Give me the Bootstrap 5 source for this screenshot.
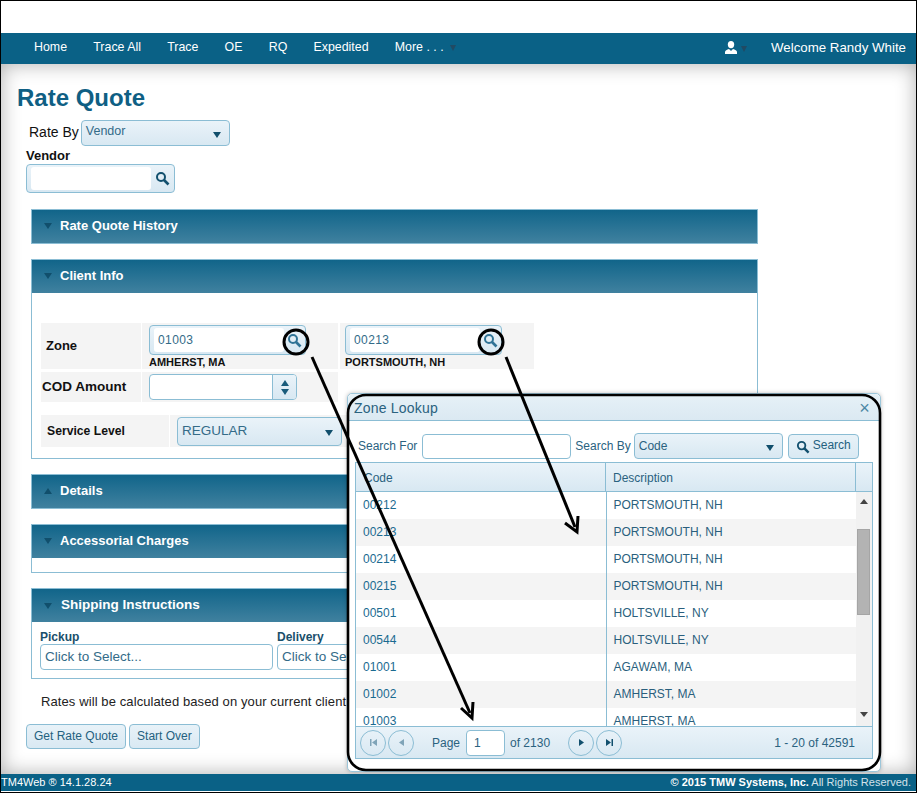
<!DOCTYPE html>
<html lang="en">
<head>
<meta charset="utf-8">
<title>Rate Quote</title>
<link href="https://cdn.jsdelivr.net/npm/bootstrap@5.3.0/dist/css/bootstrap.min.css" rel="stylesheet">
<style>
html,body{margin:0;padding:0;background:#fff;overflow:hidden}
body{font-family:"Liberation Sans",Arial,sans-serif;font-size:13px;color:#111}
.frame{position:relative;width:917px;height:793px;border:1px solid #000;display:flex;flex-direction:column;overflow:hidden;background:#fff}
.topgap{height:32px;flex:none}
.mainbar{height:31px;flex:none;background:#0a6186;color:#fff;padding:0 10px 2px 33px;display:flex;align-items:center}
.mainbar .nav{gap:26.2px;flex-wrap:nowrap}
.mainbar .nav-link{padding:0;color:#fff;font-size:12.4px;white-space:nowrap;display:flex;align-items:center;gap:6px}
.tri-dn{display:inline-block;width:0;height:0;border-left:4px solid transparent;border-right:4px solid transparent;border-top:6px solid #114f6c}
.mainbar .tri-dn.tri-mini{border-left-width:3.5px;border-right-width:3.5px;border-top-width:6px;border-top-color:#214a63;margin-top:2px}
.userbox{margin-left:auto;display:flex;align-items:center;gap:4px}
.welcome{margin-left:24px;font-size:13.3px;white-space:nowrap}
.pagearea{height:710px;flex:none;box-shadow:inset 0 0 20px rgba(0,0,0,.32);overflow:hidden;padding:0}
.pagetitle{font-size:24px;font-weight:700;color:#0f5f84;line-height:30px;margin:19px 0 0 16px}
.rateby{display:flex;align-items:center;margin:7px 0 0 28px;height:26px;font-size:14px;gap:2px}
.rateby>span{padding-bottom:1px}
.ctl-sel{display:flex;align-items:center;justify-content:space-between;border:1px solid #8bbdd4;border-radius:4px;background:linear-gradient(#eaf3f9,#d8e8f2);color:#336b88;padding:0 8px 0 4px;font-size:12.5px}
.ctl-sel .tri-dn{border-top-color:#114f6c;margin-top:3px}
.sel-rate{width:149px;height:26px;align-items:center}
.sel-rate span:first-child{margin-top:-4px}
.vlabel{font-weight:700;font-size:13px;line-height:16px;margin:2px 0 0 25px}
.lookup{display:flex;width:149px;height:29px;margin-left:25px;border:1px solid #8bbdd4;border-radius:4px;background:linear-gradient(#eaf3f9,#d8e8f2);padding:2px 0 2px 4px}
.lookup .field{flex:1;background:#fff;border-radius:3px;min-width:0;padding-left:4px;color:#336b88;font-size:12px;line-height:24px;letter-spacing:.4px}
.lookup .go{flex:none;width:23px;display:flex;align-items:center;justify-content:center}
.panel-x{width:727px;margin-left:30px;border:1px solid #8bbdd4;border-radius:0;background:#fff}
.panel-x .card-header{height:33px;padding:0 0 2px 12px;border:0;border-radius:0;background:linear-gradient(#11658a,#40819f);color:#fff;font-weight:700;font-size:13px;display:flex;align-items:center;gap:8px}
.panel-x .card-header.ship{font-size:13.5px;gap:9px;padding-bottom:0}
.tri-up{display:inline-block;width:0;height:0;border-left:4px solid transparent;border-right:4px solid transparent;border-bottom:6px solid #114f6c}
.p1{margin-top:16px;height:35px}
.p2{margin-top:15px;height:200px}
.p3{margin-top:15px;height:35px}
.p4{margin-top:15px;height:49px}
.p5{margin-top:15px;height:91px}
.clientbody{padding:30px 0 0 9px}
.zr{display:flex;gap:1px}
.cellx{background:#f4f4f4}
.zonerow .lab{width:100px;height:46px;font-weight:700;display:flex;align-items:center;padding-left:5px}
.zonecell{height:46px;padding:2px 0 0 7px}
.zc1{width:196px}
.zc2{width:194px;margin-left:1px;padding-left:5px}
.zonecell .lookup{margin:0;width:157px;height:30px;padding-left:4px}
.zonecell .lookup .go{width:21px}
.zonecell .lookup .field{padding-left:4px}
.zonecell .placename{font-size:11px;font-weight:700;line-height:12px;margin-top:1px;white-space:nowrap}
.codrow{margin-top:3px}
.codrow .lab{width:100px;height:30px;font-weight:700;display:flex;align-items:center;font-size:13.5px;padding-left:1px}
.codcell{width:196px;height:30px;padding:2px 0 0 7px}
.spin{width:148px;height:26px;border:1px solid #8bbdd4;border-radius:4px;background:#fff;display:flex;justify-content:flex-end;overflow:hidden}
.spin .arrows{width:24px;background:linear-gradient(#eaf3f9,#d8e8f2);border-left:1px solid #8bbdd4;display:flex;flex-direction:column;align-items:center;justify-content:center;gap:3px}
.spin .tri-up,.spin .tri-dn{border-top-color:#1a5c7b;border-bottom-color:#1a5c7b}
.svcrow{margin-top:13px}
.svcrow .lab{width:128px;height:32px;font-weight:700;font-size:12.2px;display:flex;align-items:center;padding-left:6px}
.svccell{width:177px;height:32px;padding:2px 0 0 7px}
.sel-svc{width:165px;height:29px;padding-left:4px;font-size:13.5px}
.shipbody{padding:8px 0 0 8px;display:flex;gap:4px}
.shipcol{width:233px;flex:none}
.shipcol label{display:block;font-weight:700;font-size:12px;line-height:14px;color:#1a4f6b;margin:0}
.clickfield{height:26px;border:1px solid #8bbdd4;border-radius:4px;padding:0 4px;line-height:24px;font-size:13.5px;color:#336b88;white-space:nowrap;overflow:hidden}
.ratenote{margin:14px 0 0 40px;font-size:13px;line-height:18px;color:#222;letter-spacing:.1px}
.btnrow{margin:13px 0 0 25px;display:flex;gap:3px}
.btn-pale{height:25px;padding:0 7px;font-size:12px;line-height:23px;border:1px solid #8bbdd4;border-radius:4px;background:linear-gradient(#e8f2f8,#d9e9f3);color:#24617f;--bs-btn-hover-color:#24617f}
.pagefoot{height:17px;flex:none;background:#0a6186;color:#fff;font-size:11px;display:flex;justify-content:space-between;align-items:center;padding:0 5px 1px 0}
.pagefoot .fine{color:#d5e2ea;font-weight:400}
.pagefoot b{font-weight:700}
.lookup-dlg{position:absolute;left:346px;top:392px;width:534px;height:379px;background:#fff;border:1px solid #9cc6da;border-radius:5px;box-shadow:0 0 4px rgba(0,0,0,.25);display:flex;flex-direction:column;z-index:5}
.dlg-title{height:27px;flex:none;background:linear-gradient(#e6f1f7,#dbe9f2);border-bottom:1px solid #8bbdd4;border-radius:5px 5px 0 0;display:flex;justify-content:space-between;align-items:center;padding:2px 10px 0 6px;font-size:14px;color:#2a627f;letter-spacing:.2px}
.dlg-x{font-size:18px;line-height:1;color:#4c87a4}
.dlg-search{height:41px;flex:none;display:flex;align-items:flex-end;padding:0 0 3px 10px;font-size:12px;color:#2a627f;gap:4px}
.dlg-search>span{line-height:25px}
.dlg-search .inp{width:149px;height:25px;border:1px solid #8bbdd4;border-radius:4px;background:#fff;margin-left:1px}
.dlg-search .sel-by{width:149px;height:26px;padding-left:4px;font-size:12px;margin-left:-1px}
.sel-by span:first-child{color:#2a627f}
.srchbtn{display:flex;align-items:center;gap:3px;height:25px;padding:0 7px 3px;margin-left:1px;font-size:12px;line-height:1}
.srchbtn svg{margin-top:3px}
.gridbox{margin-left:7px;width:518px;height:297px;border:1px solid #8bbdd4;flex:none;display:flex;flex-direction:column;overflow:hidden}
.gridhead{height:29px;flex:none;display:flex;background:linear-gradient(#eaf3f9,#d8e8f2);border-bottom:1px solid #8bbdd4;font-size:12px;color:#2a627f;line-height:30px}
.gh1{width:250px;padding-left:8px;border-right:1px solid #8bbdd4}
.gh2{width:250px;padding-left:7px;border-right:1px solid #8bbdd4}
.gridmid{height:234px;flex:none;display:flex;overflow:hidden}
.gridrows{width:500px;flex:none;overflow:hidden}
.gridrows .table{margin:0;table-layout:fixed;width:500px}
.gridrows .table>tbody>tr>td{height:27px;padding:0 0 0 7px;font-size:12px;line-height:26px;color:#2a5f7d;background:#fff;border:0;white-space:nowrap;box-shadow:none}
.gridrows .table>tbody>tr:nth-child(even)>td{background:#f4f4f4}
.gridrows .table>tbody>tr>td:first-child{width:250px;border-right:1px solid #8bbdd4;color:#1a6a90}
.fakebar{width:17px;flex:none;background:#f1f1f1;display:flex;flex-direction:column;align-items:center;padding-right:2px}
.bar-top{height:37px;flex:none;padding-top:7px}
.bar-thumb{width:13px;height:86px;background:#b3b3b3;border:1px solid #a5a5a5;flex:none}
.bar-gap{flex:1}
.bar-bot{height:14px;flex:none}
.fakebar .tri-up{border-bottom-color:#444;border-bottom-width:5px;display:block}
.fakebar .tri-dn{border-top-color:#444;border-top-width:5px;display:block}
.gridpager{flex:1;display:flex;align-items:center;background:linear-gradient(#eaf3f9,#d8e8f2);border-top:1px solid #8bbdd4;padding:0 17px 0 4px;font-size:12px;color:#2a627f}
.circ{width:26px;height:26px;border:1px solid #8bbdd4;border-radius:50%;display:flex;align-items:center;justify-content:center;flex:none}
.circ-next{margin-left:2px}
.circ-far{margin-left:18px}
.pgtxt{margin:0 6px 0 18px}
.pginp{width:39px;height:26px;background:#fff;border:1px solid #8bbdd4;border-radius:4px;padding-left:7px;line-height:24px}
.pgof{margin-left:5px}
.pgcount{margin-left:auto}
.annot{position:absolute;left:-1px;top:-1px;z-index:6;pointer-events:none}
</style>
</head>
<body>
<div class="frame">
  <div class="topgap"></div>
  <nav class="mainbar">
    <ul class="nav">
      <li class="nav-item"><a class="nav-link" href="#">Home</a></li>
      <li class="nav-item"><a class="nav-link" href="#">Trace All</a></li>
      <li class="nav-item"><a class="nav-link" href="#">Trace</a></li>
      <li class="nav-item"><a class="nav-link" href="#">OE</a></li>
      <li class="nav-item"><a class="nav-link" href="#">RQ</a></li>
      <li class="nav-item"><a class="nav-link" href="#">Expedited</a></li>
      <li class="nav-item"><a class="nav-link" href="#">More . . . <span class="tri-dn tri-mini"></span></a></li>
    </ul>
    <div class="userbox">
      <svg width="12" height="13" viewBox="0 0 12 13"><ellipse cx="6" cy="3.6" rx="3.2" ry="3.6" fill="#fff"/><path d="M0 13V11C0 9.5 2 8.5 4 8L6 10L8 8C10 8.5 12 9.5 12 11V13Z" fill="#fff"/></svg>
      <span class="tri-dn tri-mini"></span>
    </div>
    <div class="welcome">Welcome Randy White</div>
  </nav>
  <main class="pagearea">
    <h1 class="pagetitle">Rate Quote</h1>
    <div class="rateby"><span>Rate By</span>
      <div class="ctl-sel sel-rate"><span>Vendor</span><span class="tri-dn"></span></div>
    </div>
    <div class="vlabel">Vendor</div>
    <div class="lookup"><div class="field"></div><div class="go"><svg width="15" height="15" viewBox="0 0 15 15"><circle cx="6" cy="6" r="4" fill="none" stroke="#12506e" stroke-width="2"/><path d="M9 9L13.5 13.5" stroke="#12506e" stroke-width="2.6"/></svg></div></div>

    <section class="card panel-x p1"><div class="card-header"><span class="tri-dn"></span><span>Rate Quote History</span></div></section>

    <section class="card panel-x p2">
      <div class="card-header"><span class="tri-dn"></span><span>Client Info</span></div>
      <div class="clientbody">
        <div class="zr zonerow">
          <div class="cellx lab">Zone</div>
          <div class="cellx zonecell zc1">
            <div class="lookup"><div class="field">01003</div><div class="go"><svg width="15" height="15" viewBox="0 0 15 15"><circle cx="6" cy="6" r="4" fill="none" stroke="#2f7396" stroke-width="2"/><path d="M9 9L13.5 13.5" stroke="#2f7396" stroke-width="2.6"/></svg></div></div>
            <div class="placename">AMHERST, MA</div>
          </div>
          <div class="cellx zonecell zc2">
            <div class="lookup"><div class="field">00213</div><div class="go"><svg width="15" height="15" viewBox="0 0 15 15"><circle cx="6" cy="6" r="4" fill="none" stroke="#2f7396" stroke-width="2"/><path d="M9 9L13.5 13.5" stroke="#2f7396" stroke-width="2.6"/></svg></div></div>
            <div class="placename">PORTSMOUTH, NH</div>
          </div>
        </div>
        <div class="zr codrow">
          <div class="cellx lab">COD Amount</div>
          <div class="cellx codcell"><div class="spin"><div class="arrows"><span class="tri-up"></span><span class="tri-dn"></span></div></div></div>
        </div>
        <div class="zr svcrow">
          <div class="cellx lab">Service Level</div>
          <div class="cellx svccell"><div class="ctl-sel sel-svc"><span>REGULAR</span><span class="tri-dn"></span></div></div>
        </div>
      </div>
    </section>

    <section class="card panel-x p3"><div class="card-header"><span class="tri-up"></span><span>Details</span></div></section>
    <section class="card panel-x p4"><div class="card-header"><span class="tri-dn"></span><span>Accessorial Charges</span></div></section>
    <section class="card panel-x p5">
      <div class="card-header ship"><span class="tri-dn"></span><span>Shipping Instructions</span></div>
      <div class="shipbody">
        <div class="shipcol"><label>Pickup</label><div class="clickfield">Click to Select...</div></div>
        <div class="shipcol"><label>Delivery</label><div class="clickfield">Click to Select...</div></div>
      </div>
    </section>
    <p class="ratenote">Rates will be calculated based on your current client</p>
    <div class="btnrow">
      <button type="button" class="btn btn-pale">Get Rate Quote</button>
      <button type="button" class="btn btn-pale">Start Over</button>
    </div>
  </main>
  <footer class="pagefoot">
    <span>TM4Web ® 14.1.28.24</span>
    <span><b>© 2015 TMW Systems, Inc.</b> <span class="fine">All Rights Reserved.</span></span>
  </footer>

  <div class="lookup-dlg">
    <div class="dlg-title"><span>Zone Lookup</span><span class="dlg-x">×</span></div>
    <div class="dlg-search">
      <span>Search For</span><div class="inp"></div><span>Search By</span>
      <div class="ctl-sel sel-by"><span>Code</span><span class="tri-dn"></span></div>
      <button type="button" class="btn btn-pale srchbtn"><svg width="14" height="14" viewBox="0 0 15 15"><circle cx="6" cy="6" r="4" fill="none" stroke="#12506e" stroke-width="2"/><path d="M9 9L13.5 13.5" stroke="#12506e" stroke-width="2.6"/></svg>Search</button>
    </div>
    <div class="gridbox">
      <div class="gridhead"><div class="gh1">Code</div><div class="gh2">Description</div></div>
      <div class="gridmid">
        <div class="gridrows">
          <table class="table">
            <tbody>
              <tr><td>00212</td><td>PORTSMOUTH, NH</td></tr>
              <tr><td>00213</td><td>PORTSMOUTH, NH</td></tr>
              <tr><td>00214</td><td>PORTSMOUTH, NH</td></tr>
              <tr><td>00215</td><td>PORTSMOUTH, NH</td></tr>
              <tr><td>00501</td><td>HOLTSVILLE, NY</td></tr>
              <tr><td>00544</td><td>HOLTSVILLE, NY</td></tr>
              <tr><td>01001</td><td>AGAWAM, MA</td></tr>
              <tr><td>01002</td><td>AMHERST, MA</td></tr>
              <tr><td>01003</td><td>AMHERST, MA</td></tr>
            </tbody>
          </table>
        </div>
        <div class="fakebar">
          <div class="bar-top"><span class="tri-up"></span></div>
          <div class="bar-thumb"></div>
          <div class="bar-gap"></div>
          <div class="bar-bot"><span class="tri-dn"></span></div>
        </div>
      </div>
      <div class="gridpager">
        <span class="circ"><svg width="9" height="9" viewBox="0 0 9 9"><path d="M1 1H2.5V8H1ZM8 1V8L3 4.5Z" fill="#7fa4b8"/></svg></span>
        <span class="circ circ-next"><svg width="9" height="9" viewBox="0 0 9 9"><path d="M7 1V8L2 4.5Z" fill="#7fa4b8"/></svg></span>
        <span class="pgtxt">Page</span>
        <div class="pginp">1</div>
        <span class="pgof">of 2130</span>
        <span class="circ circ-far"><svg width="9" height="9" viewBox="0 0 9 9"><path d="M2 1V8L7 4.5Z" fill="#12506e"/></svg></span>
        <span class="circ circ-next"><svg width="9" height="9" viewBox="0 0 9 9"><path d="M1 1V8L6 4.5ZM6.5 1H8V8H6.5Z" fill="#12506e"/></svg></span>
        <span class="pgcount">1 - 20 of 42591</span>
      </div>
    </div>
  </div>

  <svg class="annot" width="917" height="793" viewBox="0 0 917 793">
    <rect x="348" y="395" width="532" height="375" rx="18" fill="none" stroke="#000" stroke-width="2.6"/>
    <circle cx="296" cy="342" r="12" fill="none" stroke="#000" stroke-width="3"/>
    <circle cx="491" cy="342" r="12" fill="none" stroke="#000" stroke-width="3"/>
    <path d="M312 357L470 713" stroke="#000" stroke-width="3" fill="none"/>
    <path d="M461 708L472 718L473 702" stroke="#000" stroke-width="3" fill="none"/>
    <path d="M506 357L575 527" stroke="#000" stroke-width="3" fill="none"/>
    <path d="M565 523L577 532L578 516" stroke="#000" stroke-width="3" fill="none"/>
  </svg>
</div>
<script src="https://cdn.jsdelivr.net/npm/bootstrap@5.3.0/dist/js/bootstrap.bundle.min.js"></script>
</body>
</html>
